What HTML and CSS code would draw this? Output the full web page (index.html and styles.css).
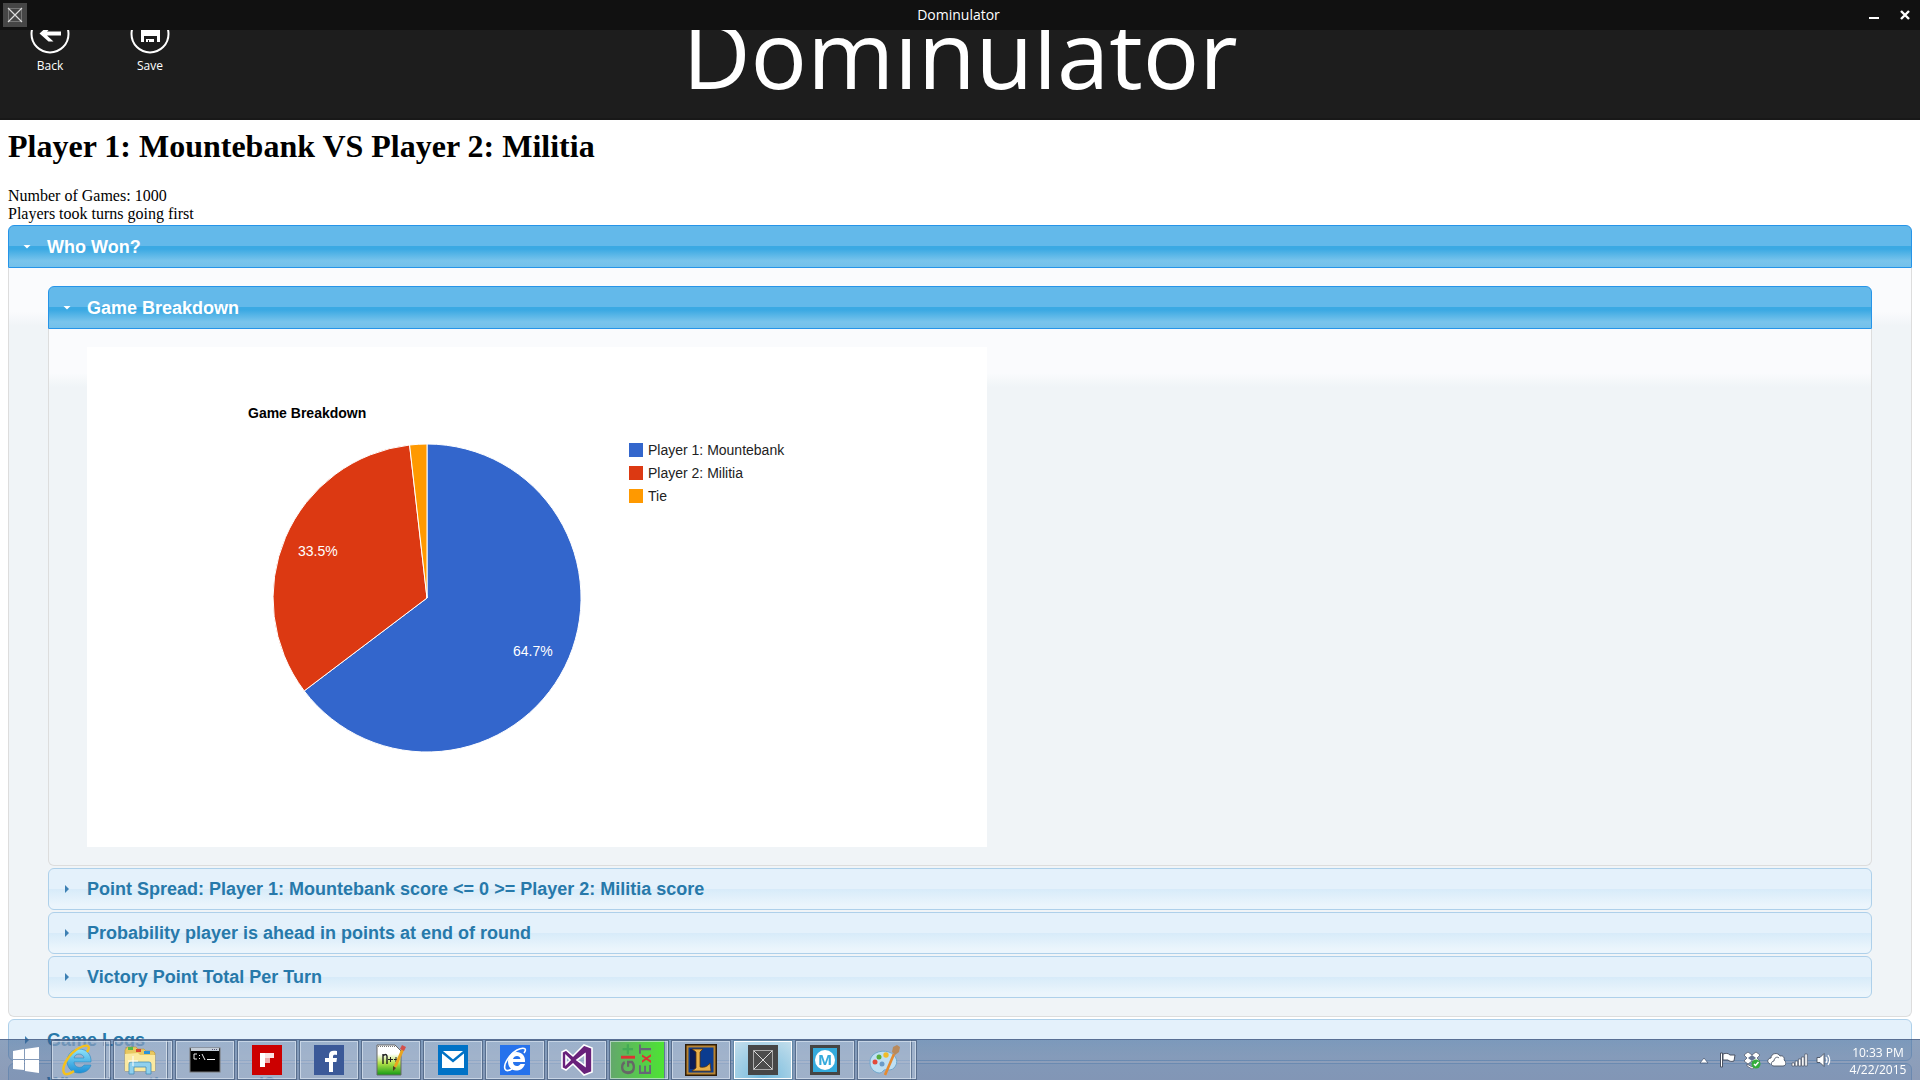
FILE: index.html
```html
<!DOCTYPE html>
<html lang="en">
<head>
<meta charset="utf-8">
<title>Dominulator</title>
<link rel="stylesheet" href="styles.css">
</head>
<body>
<div class="titlebar">
  <svg class="titlebar-icon" viewBox="0 0 24 24" aria-hidden="true"><rect width="24" height="24" fill="#464646"/><g fill="none" stroke="#777"><rect x="5.500" y="5.500" width="13" height="13"/></g><path d="M5 5l14 14M19 5L5 19" stroke="#ddd" stroke-width="1.200"/></svg>
  <span class="titlebar-name">Dominulator</span>
  <div class="window-controls">
    <button class="window-button" aria-label="Minimize"><svg viewBox="0 0 12 12"><path d="M1 9h10" stroke="#fff" stroke-width="2"/></svg></button>
    <button class="window-button" aria-label="Close"><svg viewBox="0 0 12 12"><path d="M2 2l8 8M10 2L2 10" stroke="#fff" stroke-width="2.400"/></svg></button>
  </div>
</div>

<header class="app-header">
  <div class="app-actions">
    <button class="app-action">
      <svg viewBox="0 0 40 40" aria-hidden="true"><circle cx="20" cy="20" r="18.500" fill="none" stroke="#fff" stroke-width="2"/><path d="M9.500 19.500l10-9h5l-7.500 7h14v4H17l6.500 6h-5z" fill="#fff"/></svg>
      <span>Back</span>
    </button>
    <button class="app-action">
      <svg viewBox="0 0 40 40" aria-hidden="true"><circle cx="20" cy="20" r="18.500" fill="none" stroke="#fff" stroke-width="2"/><path d="M11 10h16l3 3v15h-3v-6H14v6h-3zM16 25h8v3h-5v-2h-1v2h-2z" fill="#fff"/></svg>
      <span>Save</span>
    </button>
  </div>
  <div class="app-title">Dominulator</div>
</header>

<main class="report">
  <h1>Player 1: Mountebank VS Player 2: Militia</h1>
  <p>Number of Games: 1000<br>Players took turns going first</p>

  <details class="section" open>
    <summary>Who Won?</summary>
    <div class="panel">
      <details class="section" open>
        <summary>Game Breakdown</summary>
        <div class="panel">
          <svg class="chart" viewBox="0 0 900 500" role="img" aria-label="Game Breakdown">
            <text class="chart-title" x="161" y="71">Game Breakdown</text>
            <g stroke="#fff" stroke-width="1">
              <path fill="#3366cc" d="M340 251V97A154 154 0 1 1 217.200 343.900Z"/>
              <path fill="#dc3912" d="M340 251L217.200 343.900A154 154 0 0 1 322.600 98Z"/>
              <path fill="#ff9900" d="M340 251L322.600 98A154 154 0 0 1 340 97Z"/>
            </g>
            <g class="chart-value">
              <text x="211" y="209">33.5%</text>
              <text x="426" y="309">64.7%</text>
            </g>
            <rect x="542" y="96" width="14" height="14" fill="#3366cc"/>
            <rect x="542" y="119" width="14" height="14" fill="#dc3912"/>
            <rect x="542" y="142" width="14" height="14" fill="#ff9900"/>
            <g class="chart-legend">
              <text x="561" y="108">Player 1: Mountebank</text>
              <text x="561" y="131">Player 2: Militia</text>
              <text x="561" y="154">Tie</text>
            </g>
          </svg>
        </div>
      </details>
      <details class="section">
        <summary>Point Spread: Player 1: Mountebank score &lt;= 0 &gt;= Player 2: Militia score</summary>
      </details>
      <details class="section">
        <summary>Probability player is ahead in points at end of round</summary>
      </details>
      <details class="section">
        <summary>Victory Point Total Per Turn</summary>
      </details>
    </div>
  </details>
  <details class="section">
    <summary>Game Logs</summary>
  </details>
  <details class="section">
    <summary>When does the game end?</summary>
  </details>
</main>

<nav class="taskbar" aria-label="Taskbar">
  <button class="start" aria-label="Start"><svg viewBox="0 0 28 28"><path fill="#fff" d="M1 5l11-2v10H1zM13 3l14-2v12H13zM1 14h11v10L1 23zM13 14h14v13l-14-2z"/></svg></button>
  <div class="tasks">
    <button class="task stacked" aria-label="Internet Explorer"><svg viewBox="0 0 32 32"><defs><linearGradient id="ie" x2="0" y2="1"><stop offset="0" stop-color="#8fe3fb"/><stop offset="1" stop-color="#1c8fd6"/></linearGradient></defs><path fill="url(#ie)" stroke="#2d86bd" stroke-width=".6" d="M29 18H12c0 6 8 7 10 3h7c-2 6-7 8-12 8C9 29 5 23 5 17S10 5 17 5c8 0 12.500 6 12 13zM12 14h10c-.5-5-9-5.500-10 0z"/><path fill="none" stroke="#f5c11c" stroke-width="2.400" d="M25 8c5-7-1-8-8-4C8 9-1 22 2 29c2 3 7 0 10-2"/></svg></button>
    <button class="task stacked" aria-label="File Explorer"><svg viewBox="0 0 32 32"><path fill="#e8c860" stroke="#b99536" stroke-width=".6" d="M1 27V6l2-3h9l2 2h6l2 2h7l2 2v18z"/><path fill="#55b948" d="M4 3h5v3H4z"/><path fill="#d9452c" d="M12 5h5v3h-5z"/><path fill="#2b93d8" d="M20 7h6v3h-6z"/><path fill="#fae9a0" d="M1 10l13-1 2 2h15v16H1z"/><path fill="#8fd0ee" stroke="#448eb5" stroke-width=".8" d="M5 30V20q0-2 2-2h18q2 0 2 2v10h-5v-7H10v7z"/><path d="M9 12v10M4 17h10" stroke="#fff"/></svg></button>
    <button class="task" aria-label="Command Prompt"><svg viewBox="0 0 32 32"><rect x="1" y="4" width="30" height="24" fill="#000" stroke="#777"/><path fill="#c5ced8" d="M2 4h28v3H2z"/><path d="M23 5.500h5" stroke="#557" stroke-dasharray="1 1"/><path fill="none" stroke="#eee" d="M8 10H5v5h3M10.500 11v1M10.500 14v1M13 10l3 6M18 15.500h8"/></svg></button>
    <button class="task" aria-label="Flipboard"><svg viewBox="0 0 32 32"><path fill="#c00" d="M1 1h30v30H1z"/><path fill="#fff" d="M9 9h5v14H9z"/><path fill="#fbe3e3" d="M14 9h9v5h-9z"/><path fill="#eeaaaa" d="M14 14h5v5h-5z"/></svg></button>
    <button class="task" aria-label="Facebook"><svg viewBox="0 0 32 32"><path fill="#3b5998" d="M1 1h30v30H1z"/><path fill="#fff" d="M16 28V18h-4v-4h4v-3c0-4 3-5 8-4v4c-3-.4-4 0-4 1.500V14h4l-.6 4H20v10z"/></svg></button>
    <button class="task" aria-label="Notepad++"><svg viewBox="0 0 32 32"><defs><linearGradient id="np" x2="0" y2="1"><stop offset=".3" stop-color="#fff"/><stop offset=".6" stop-color="#b5e34a"/><stop offset="1" stop-color="#149a14"/></linearGradient></defs><path fill="url(#np)" stroke="#666" d="M2 1h18l6 6v24H2z"/><path d="M3 2.500h18" stroke="#777" stroke-dasharray="1 1"/><path fill="none" stroke="#222" stroke-width="1.400" d="M8 20V10M8 12q3-3 4 0v8"/><path fill="none" stroke="#222" d="M13 15.500h5M15.500 13v5M19 15.500h4M21 13v5"/><path stroke="#e9a520" stroke-width="3" d="M28 5l-8 18"/><path fill="#d4504c" d="M27 1l4 2-2 4-4-2z"/><path fill="#503c20" d="M18 22l3 2-3 3z"/></svg></button>
    <button class="task" aria-label="Mail"><svg viewBox="0 0 32 32"><path fill="#0072c6" d="M1 1h30v30H1z"/><path fill="#fff" d="M5 7h22v17H5z"/><path fill="none" stroke="#0072c6" stroke-width="2.400" d="M4 7l12 10L28 7"/></svg></button>
    <button class="task" aria-label="Internet Explorer app"><svg viewBox="0 0 32 32"><path fill="#2672ec" d="M1 1h30v30H1z"/><path fill="#fff" d="M26 18H14c0 5 6 5 7.500 2H26c-2 5-5 6.500-9 6.500-5 0-8-4-8-9S12 8 17.500 8 26.500 12 26 18zM14 15h7.500c-.4-4-6.500-4-7.500 0z"/><path fill="none" stroke="#fff" stroke-width="1.600" d="M25 9c4-5-1-6-7-3C11 10 4 20 6 25c1 3 5 1 7 0"/></svg></button>
    <button class="task" aria-label="Visual Studio"><svg viewBox="0 0 32 32"><path fill="#68217a" fill-rule="evenodd" stroke="#fff" stroke-width="1.600" d="M1 8l4-2 7 6L23 1l8 3v24l-8 3-11-11-7 6-4-2zM5 12v8l4-4zM24 10l-8 6 8 6z"/></svg></button>
    <button class="task stacked git" aria-label="Git Extensions"><svg viewBox="0 0 32 32"><g class="git-text" transform="rotate(-90)"><text x="-31" y="15" fill="#666">G</text><text x="-16" y="15" fill="#d33">I</text><text x="-11" y="15" fill="#4a5">+</text><text class="git-small" x="-31" y="31" fill="#667">E</text><text class="git-small" x="-19" y="31" fill="#d33">x</text><text class="git-small" x="-10" y="31" fill="#667">T</text></g></svg></button>
    <button class="task" aria-label="League of Legends"><svg viewBox="0 0 32 32"><rect x="1" y="1" width="30" height="30" fill="#0b3c8f" stroke="#2d1c0a" stroke-width="2"/><rect x="2.500" y="2.500" width="27" height="27" fill="none" stroke="#b98431" stroke-width="2"/><path fill="#0a1c58" d="M5 5h6v20H5z"/><path fill="#e9b04a" stroke="#5a3308" stroke-width=".8" d="M7 5h11l-3 3v15c5 1 8-1 10-4l1 8H7l4-3V8z"/></svg></button>
    <button class="task active" aria-label="Dominulator"><svg viewBox="0 0 32 32"><path fill="#464646" d="M1 1h30v30H1z"/><rect x="6.500" y="6.500" width="19" height="19" fill="#4d4d4d" stroke="#aaa"/><path d="M7 7l18 18M25 7L7 25" stroke="#ddd"/></svg></button>
    <button class="task" aria-label="M"><svg viewBox="0 0 32 32"><path fill="#444" d="M1 1h30v30H1z"/><path fill="#34aadc" d="M4 4h24v24H4z"/><circle cx="16" cy="16" r="10" fill="#fff"/><text class="m-text" x="16" y="21" text-anchor="middle">M</text></svg></button>
    <button class="task stacked" aria-label="Paint"><svg viewBox="0 0 32 32"><path fill="#bfe0f3" stroke="#6fa6cc" d="M2 19C1 10 12 5 21 8c8 3 10 11 5 16-4 4-9 0-11 3-3 5-13 0-13-8z"/><circle cx="7" cy="18" r="2.500" fill="#e24a3b"/><circle cx="11" cy="13" r="2.500" fill="#57ad3e"/><circle cx="18" cy="11" r="2.700" fill="#f0bc2a"/><circle cx="14" cy="20" r="2.500" fill="#6b9cc8"/><path stroke="#e58a2f" stroke-width="2.600" d="M26 10l-9 21"/><path fill="#b98a5c" d="M24 8l1-5 4-2 3 2-1 5-4 3z"/></svg></button>
  </div>
  <div class="tray">
    <button class="tray-icon" aria-label="Show hidden icons"><svg viewBox="0 0 20 20"><path fill="#fff" stroke="#4c5d78" stroke-width=".8" d="M6 13l4-5 4 5z"/></svg></button>
    <button class="tray-icon" aria-label="Action Center"><svg viewBox="0 0 20 20"><path fill="#fff" stroke="#4a5263" stroke-width="1" d="M2.500 3h2v14h-2zM5 4c3-1 5-1 7 1l5 0-1 6c-3 1-5 0-6-1H5z"/></svg></button>
    <button class="tray-icon" aria-label="Dropbox"><svg viewBox="0 0 20 20"><path fill="#fff" stroke="#4a5263" stroke-width=".7" d="M6 2l4 3 4-3 4 3-3 3 3 3-4 3-4-3-4 3-4-3 3-3-3-3zM5 14l5 3 5-3v2l-5 3-5-3z"/><path fill="#637493" d="M10 5l4 3-4 3-4-3z"/><circle cx="14" cy="14" r="4.500" fill="#35ad3d"/><path fill="none" stroke="#fff" stroke-width="1.500" d="M12 14l1.500 1.500L16.500 12"/></svg></button>
    <button class="tray-icon" aria-label="OneDrive"><svg viewBox="0 0 20 20"><path fill="#fff" stroke="#4a5263" stroke-width=".9" d="M4 14c-4-2-2-6 1-6 0-5 7-6 9-2 3-1 5 2 4 4 3 2 2 6-1 6H8c-4 0-3-5 0-5 0-3 3-5 5-3"/></svg></button>
    <button class="tray-icon" aria-label="Network"><svg viewBox="0 0 20 20"><path fill="#fff" stroke="#4a5263" stroke-width=".7" d="M2 13h2.500v3H2zM5.200 11h2.500v5H5.200zM8.400 9h2.500v7H8.400zM11.600 7h2.500v9h-2.500zM14.800 4h2.500v12h-2.500z"/></svg></button>
    <button class="tray-icon" aria-label="Volume"><svg viewBox="0 0 20 20"><path fill="#fff" stroke="#4a5263" stroke-width=".9" d="M3 7.500h3l4-4v13l-4-4H3z"/><path fill="none" stroke="#fff" stroke-width="1.200" d="M12 7q2 3 0 6M14 5q3.500 5 0 10"/></svg></button>
    <div class="clock"><span>10:33 PM</span><span>4/22/2015</span></div>
  </div>
</nav>
</body>
</html>
```
FILE: styles.css
```css
* {
  box-sizing: border-box;
}

body {
  display: flex;
  flex-direction: column;
  height: 100vh;
  margin: 0;
  overflow: hidden;
  background: #fff;
  color: #000;
  font: 16px/18px "Liberation Serif", serif;
}

button {
  display: flex;
  align-items: center;
  justify-content: center;
  margin: 0;
  padding: 0;
  border: 0;
  background: none;
  color: inherit;
  font: inherit;
}

/* Window title bar */
.titlebar {
  display: grid;
  grid-template-columns: 1fr auto 1fr;
  align-items: center;
  flex: none;
  height: 30px;
  padding: 0 6px 0 3px;
  background: #111;
  color: #fff;
  font: 14px/20px "Open Sans", sans-serif;
}

.titlebar-icon {
  width: 24px;
  height: 24px;
}

.window-controls {
  display: flex;
  justify-content: flex-end;
  gap: 12px;
}

.window-button {
  width: 19px;
  height: 20px;
}

.window-button svg {
  width: 12px;
  height: 12px;
}

/* Application header: the content is anchored to the bottom edge
   and its top runs under the title bar */
.app-header {
  display: grid;
  grid-template-rows: 100%;
  grid-template-columns: 1fr auto 1fr;
  align-items: end;
  flex: none;
  height: 90px;
  overflow: hidden;
  border-bottom: 2px solid #181818;
  background: #1d1d1d;
  color: #fff;
  font-family: "Open Sans", sans-serif;
}

.app-actions {
  display: flex;
  padding-bottom: 44px;
}

.app-action {
  flex-direction: column;
  gap: 4px;
  width: 100px;
  font-size: 12px;
  line-height: 16px;
}

.app-action svg {
  width: 40px;
  height: 40px;
}

.app-title {
  padding-bottom: 18px;
  font-size: 94px;
  line-height: 94px;
}

/* Report */
.report {
  flex: 1;
  min-height: 0;
  padding: 8px 8px 0;
  overflow: hidden;
}

.report h1 {
  margin: 0 0 22px;
  font-size: 32px;
  line-height: 37px;
}

.report p {
  margin: 0;
}

.section {
  margin-top: 2px;
  font-family: "Liberation Sans", sans-serif;
}

.panel > .section:first-child {
  margin-top: 0;
}

.section > summary {
  display: flex;
  align-items: center;
  height: 42px;
  padding: 0 14px;
  border: 1px solid #aed0ea;
  border-radius: 6px;
  background: linear-gradient(#e4f1fb 50%, #d7ebf9 50%, #ebf5fc 90%);
  color: #2779aa;
  font-size: 18px;
  font-weight: bold;
  line-height: 22px;
  list-style: none;
}

.section > summary::before {
  content: "";
  width: 4px;
  height: 8px;
  margin: 0 18px 0 2px;
  background: #3d80b3;
  clip-path: polygon(0 0, 100% 50%, 0 100%);
}

.section[open] > summary {
  height: 43px;
  border-color: #2694e8;
  border-radius: 6px 6px 0 0;
  background: linear-gradient(#63b9ea 49%, #3ba9e3 49%, #3ba9e3 56%, #79c4ec 85%, #73c1eb);
  color: #fff;
}

.section[open] > summary::before {
  width: 8px;
  height: 4px;
  margin: 0 16px 0 0;
  background: #fff;
  clip-path: polygon(0 0, 100% 0, 50% 100%);
}

.panel {
  padding: 18px 39px;
  border: 1px solid #ddd;
  border-top: 0;
  border-radius: 0 0 6px 6px;
  background: linear-gradient(#fafbfd 44px, #f0f4f7 58px);
}

.panel .panel {
  padding: 18px 38px;
}

.chart {
  display: block;
  width: 900px;
  max-width: 100%;
  background: #fff;
  font-size: 14px;
}

.chart-title {
  font-weight: bold;
}

.chart-value {
  fill: #fff;
}

.chart-legend {
  fill: #222;
}

/* Taskbar, over the page */
.taskbar {
  position: fixed;
  right: 0;
  bottom: 0;
  left: 0;
  display: flex;
  height: 41px;
  border-top: 1px solid rgba(60, 85, 125, 0.6);
  background: linear-gradient(rgba(58, 94, 142, 0.58), rgba(58, 84, 132, 0.58));
  color: #fff;
  font: 12px/17px "Open Sans", sans-serif;
}

.start {
  width: 51px;
}

.start svg {
  width: 28px;
  height: 28px;
}

.tasks {
  display: flex;
  gap: 2px;
}

.task {
  width: 60px;
  border: 1px solid rgba(70, 92, 125, 0.8);
  background: rgba(205, 216, 230, 0.4);
  box-shadow: inset 0 0 0 1px rgba(225, 235, 245, 0.6);
}

.task svg {
  width: 32px;
  height: 32px;
}

.stacked {
  padding-right: 6px;
  background-image: linear-gradient(90deg, transparent 52px, #d0dbe7 52px, #d0dbe7 53px, #627896 53px, #627896 54px, transparent 54px);
}

.git {
  background-image: linear-gradient(90deg, #63a76c, #4de433 54px, #627896 54px, #627896 55px, transparent 55px);
}

.active {
  border-color: #6387a5;
  background: radial-gradient(circle at 50% 100%, #72b9dc, #c5dfec);
  box-shadow: inset 0 0 0 1px #fff;
}

.git-text {
  font: bold 20px "Liberation Sans", sans-serif;
}

.git-small {
  font-size: 16px;
}

.m-text {
  fill: #34aadc;
  font: bold 15px "Open Sans", sans-serif;
}

.tray {
  display: flex;
  align-items: center;
  margin-left: auto;
}

.tray-icon {
  width: 24px;
}

.tray-icon svg {
  width: 20px;
  height: 20px;
}

.clock {
  display: flex;
  flex-direction: column;
  align-items: center;
  padding-top: 2px;
  width: 84px;
}
```
